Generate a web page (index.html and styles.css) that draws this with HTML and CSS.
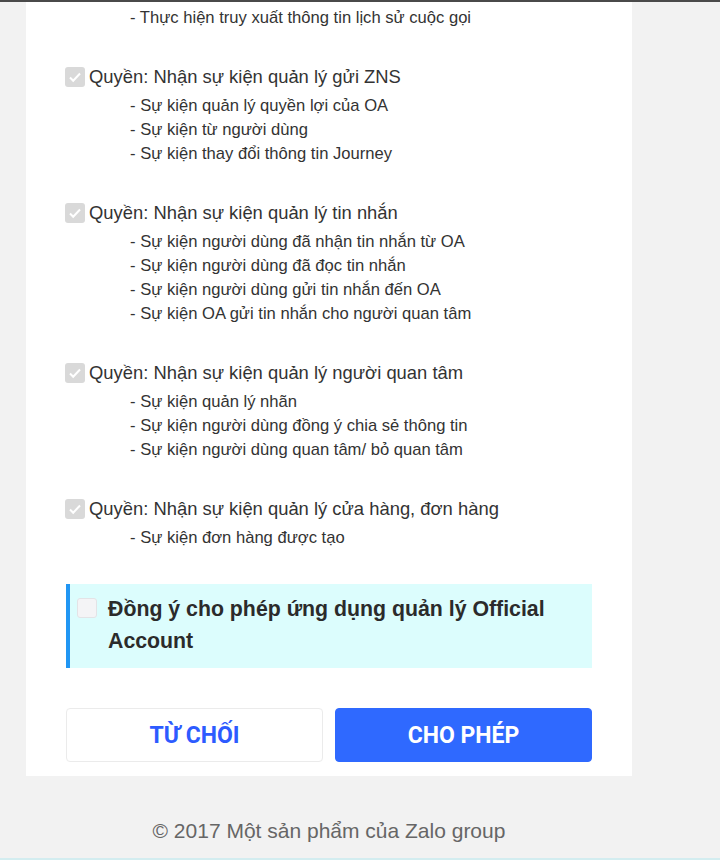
FILE: index.html
```html
<!DOCTYPE html>
<html lang="vi">
<head>
<meta charset="utf-8">
<title>Cấp quyền ứng dụng</title>
<link rel="stylesheet" href="styles.css">
</head>
<body>
<div class="topline"></div>
<main class="page">
  <section class="card">
    <ul class="subs subs-first">
      <li>- Thực hiện gọi đến người dùng</li>
      <li>- Thực hiện truy xuất thông tin lịch sử cuộc gọi</li>
    </ul>

    <div class="perm">
      <div class="perm-title"><span class="cb cb-checked"><svg viewBox="0 0 20 20" width="20" height="20"><path d="M5 10.5l3.2 3.2L15 6.5" fill="none" stroke="#fff" stroke-width="2"/></svg></span>Quyền: Nhận sự kiện quản lý gửi ZNS</div>
      <ul class="subs">
        <li>- Sự kiện quản lý quyền lợi của OA</li>
        <li>- Sự kiện từ người dùng</li>
        <li>- Sự kiện thay đổi thông tin Journey</li>
      </ul>
    </div>

    <div class="perm">
      <div class="perm-title"><span class="cb cb-checked"><svg viewBox="0 0 20 20" width="20" height="20"><path d="M5 10.5l3.2 3.2L15 6.5" fill="none" stroke="#fff" stroke-width="2"/></svg></span>Quyền: Nhận sự kiện quản lý tin nhắn</div>
      <ul class="subs">
        <li>- Sự kiện người dùng đã nhận tin nhắn từ OA</li>
        <li>- Sự kiện người dùng đã đọc tin nhắn</li>
        <li>- Sự kiện người dùng gửi tin nhắn đến OA</li>
        <li>- Sự kiện OA gửi tin nhắn cho người quan tâm</li>
      </ul>
    </div>

    <div class="perm">
      <div class="perm-title"><span class="cb cb-checked"><svg viewBox="0 0 20 20" width="20" height="20"><path d="M5 10.5l3.2 3.2L15 6.5" fill="none" stroke="#fff" stroke-width="2"/></svg></span>Quyền: Nhận sự kiện quản lý người quan tâm</div>
      <ul class="subs">
        <li>- Sự kiện quản lý nhãn</li>
        <li>- Sự kiện người dùng đồng ý chia sẻ thông tin</li>
        <li>- Sự kiện người dùng quan tâm/ bỏ quan tâm</li>
      </ul>
    </div>

    <div class="perm">
      <div class="perm-title"><span class="cb cb-checked"><svg viewBox="0 0 20 20" width="20" height="20"><path d="M5 10.5l3.2 3.2L15 6.5" fill="none" stroke="#fff" stroke-width="2"/></svg></span>Quyền: Nhận sự kiện quản lý cửa hàng, đơn hàng</div>
      <ul class="subs">
        <li>- Sự kiện đơn hàng được tạo</li>
      </ul>
    </div>

    <label class="consent">
      <span class="cb cb-empty"></span>
      <span class="consent-text">Đồng ý cho phép ứng dụng quản lý Official Account</span>
    </label>

    <div class="actions">
      <button class="btn btn-deny" type="button">TỪ CHỐI</button>
      <button class="btn btn-allow" type="button">CHO PHÉP</button>
    </div>
  </section>

  <footer class="footer">© 2017 Một sản phẩm của Zalo group</footer>
</main>
<div class="bottomline"></div>
</body>
</html>
```

FILE: styles.css
```css
html, body {
  margin: 0;
  padding: 0;
}
body {
  background: #f2f2f2;
  font-family: "Liberation Sans", Arial, sans-serif;
  color: #333;
  height: 860px;
  overflow: hidden;
  position: relative;
}
.topline {
  position: absolute;
  top: 0;
  left: 0;
  right: 0;
  height: 2px;
  background: #4a4a4a;
  z-index: 2;
}
.page {
  width: 606px;
  margin-left: 26px;
  margin-top: -18px;
}
.card {
  background: #fff;
  padding: 0 40px 14px 40px;
}
.subs {
  list-style: none;
  margin: 5px 0 0 0;
  padding: 0 0 0 64px;
  font-size: 16.6px;
  line-height: 24px;
  color: #333;
}
.subs-first {
  margin-top: 0;
}
.perm {
  margin-top: 35px;
}
.perm-title {
  display: flex;
  align-items: center;
  gap: 4px;
  font-size: 18.4px;
  line-height: 24px;
  color: #333;
  margin-left: -1px;
}
.cb {
  width: 20px;
  height: 20px;
  border-radius: 3px;
  flex: none;
  display: block;
  box-sizing: border-box;
}
.cb svg {
  display: block;
}
.cb-checked {
  background: #d9d9d9;
}
.cb-empty {
  background: #f4f4f6;
  border: 1px solid #e3e3e6;
  margin-top: 5px;
}
.consent {
  display: flex;
  align-items: flex-start;
  gap: 11px;
  margin-top: 34px;
  background: #dcfdfd;
  border-left: 4px solid #2196f3;
  padding: 9px 30px 11px 7px;
}
.consent-text {
  font-size: 21.3px;
  font-weight: bold;
  line-height: 32px;
  color: #2b2b2b;
}
.actions {
  display: grid;
  grid-template-columns: 1fr 1fr;
  gap: 12px;
  margin-top: 40px;
}
.btn {
  height: 54px;
  border-radius: 4px;
  font-family: "Roboto", "Liberation Sans", Arial, sans-serif;
  font-size: 23px;
  font-weight: bold;
  cursor: pointer;
}
.btn-deny {
  background: #fff;
  border: 1px solid #ebebeb;
  color: #2d5bff;
}
.btn-allow {
  background: #2f69ff;
  border: 1px solid #2f69ff;
  color: #fff;
}
.footer {
  margin-top: 43px;
  text-align: center;
  font-size: 21px;
  line-height: 24px;
  color: #666;
}
.bottomline {
  position: absolute;
  left: 0;
  right: 0;
  top: 858px;
  height: 2px;
  background: #d3edf0;
}
```
